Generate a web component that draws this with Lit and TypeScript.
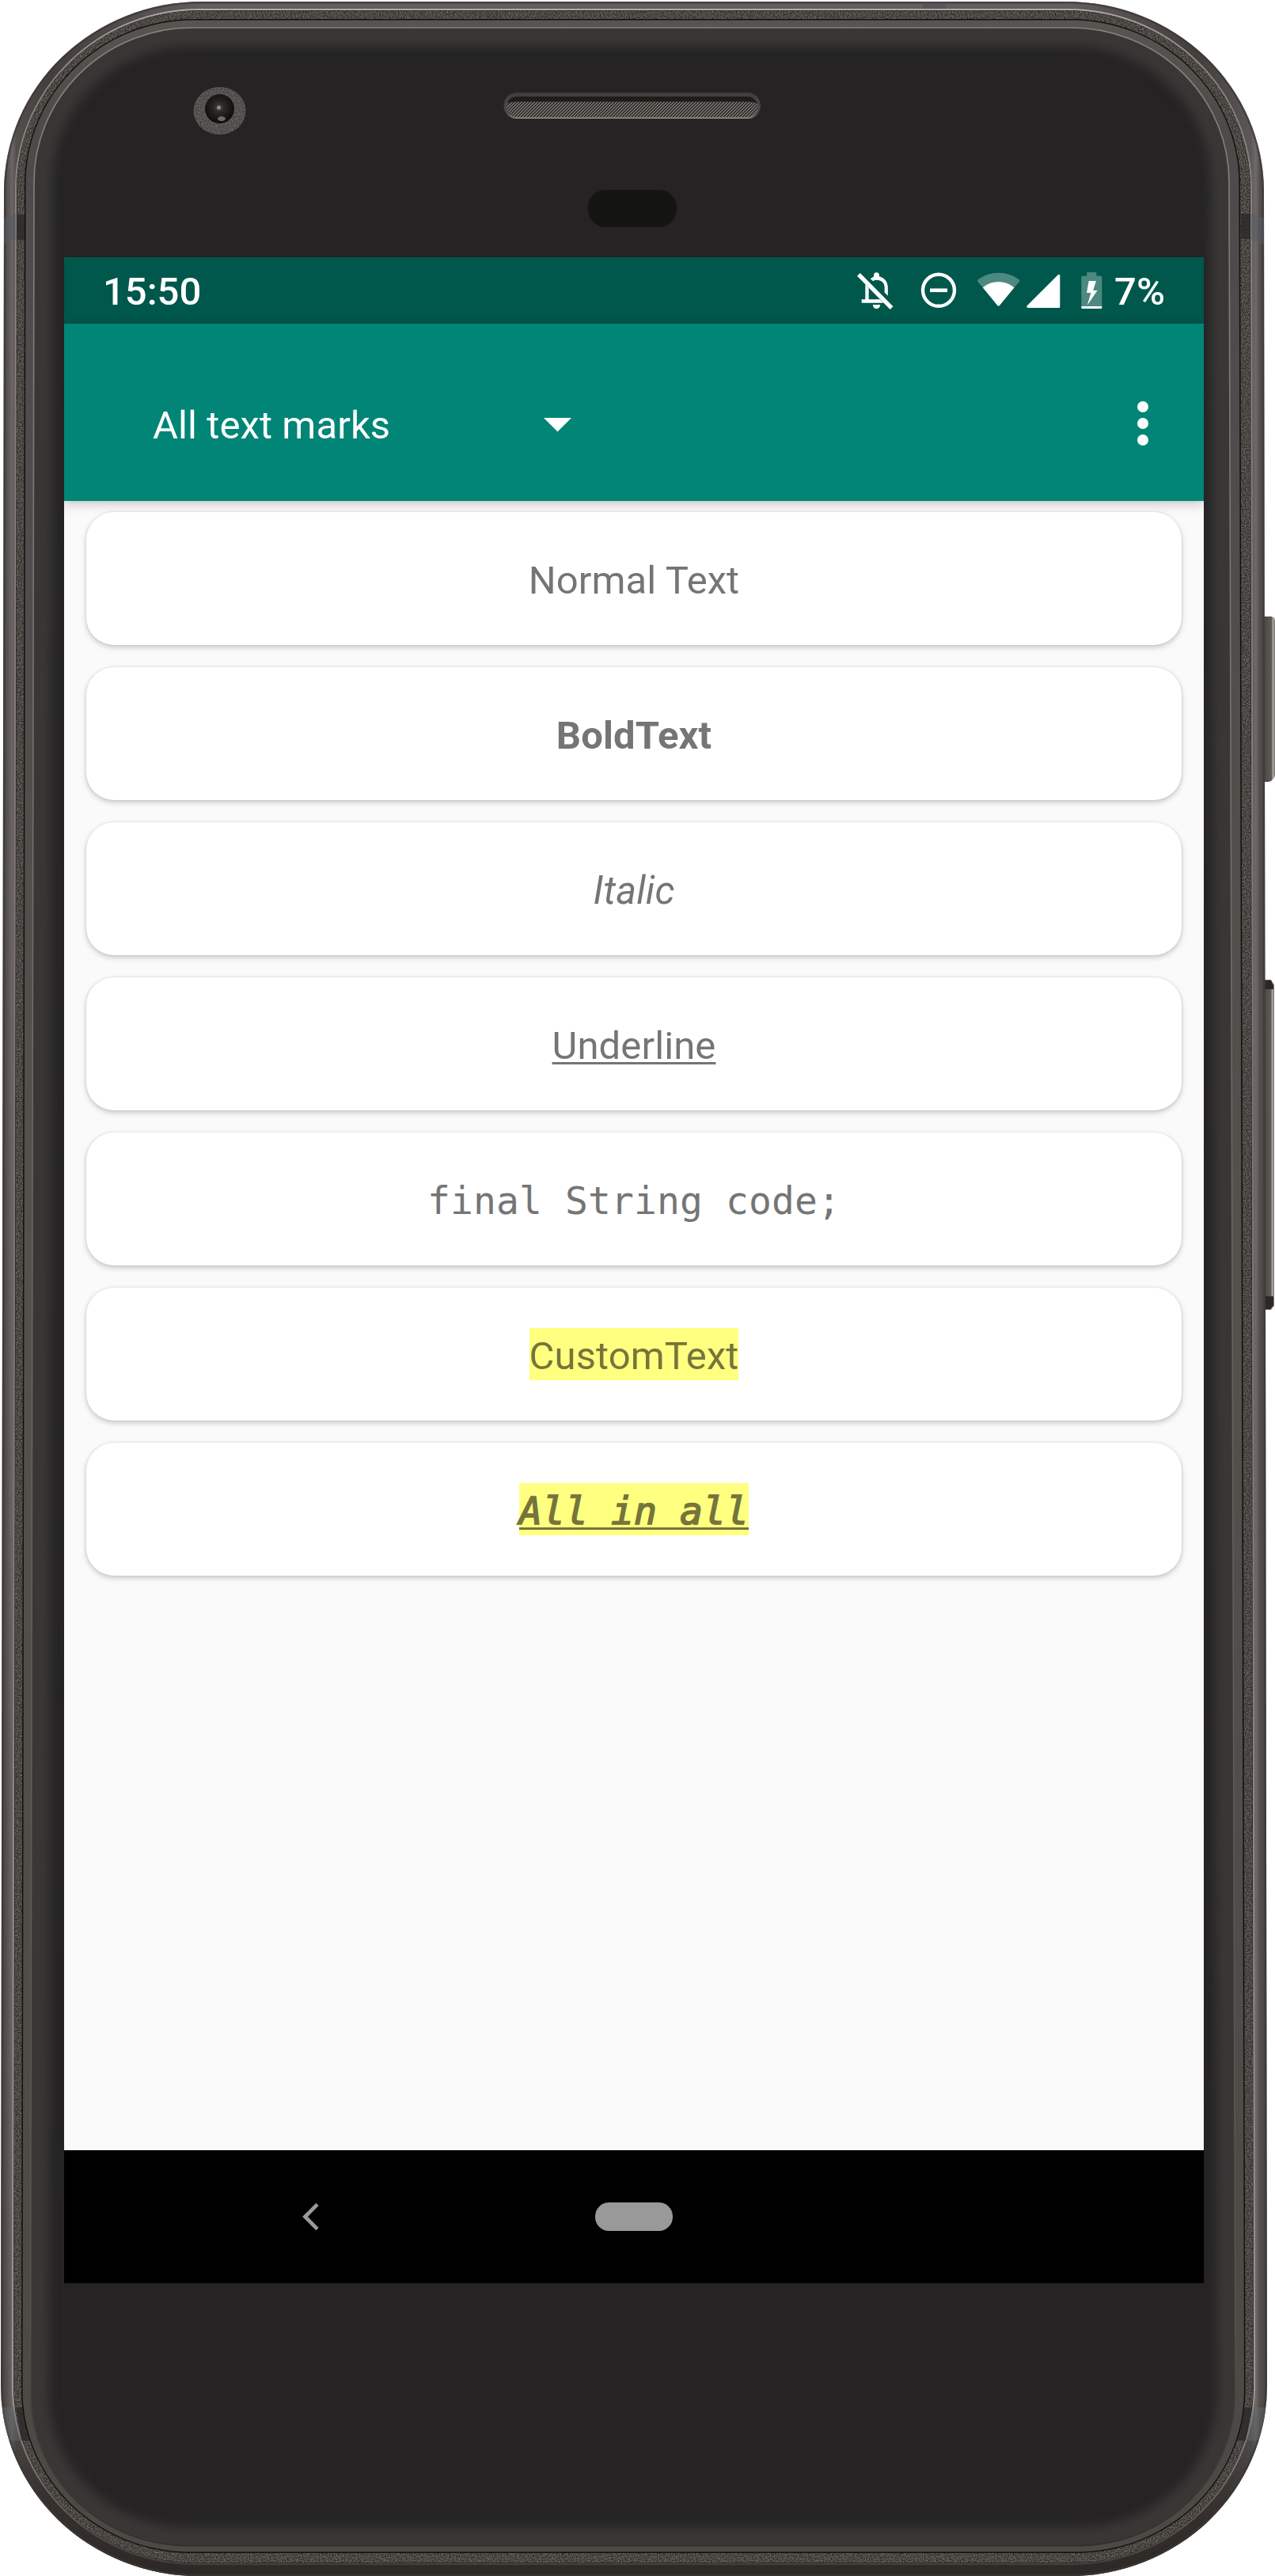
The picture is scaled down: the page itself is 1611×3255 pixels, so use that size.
import { LitElement, html, css, svg } from "lit";
import { customElement, property } from "lit/decorators.js";
import { classMap } from "lit/directives/class-map.js";

interface Shape {
  lt: number; lb: number; rt: number; rb: number;
  t: number; b: number;
  rx: number; ryt: number; ryb: number;
}

/** Rounded outline whose sides lean slightly outwards towards the bottom. */
function outline(s: Shape): string {
  return [
    `M${s.lt + s.rx} ${s.t}`,
    `H${s.rt - s.rx}`,
    `A${s.rx} ${s.ryt} 0 0 1 ${s.rt} ${s.t + s.ryt}`,
    `L${s.rb} ${s.b - s.ryb}`,
    `A${s.rx} ${s.ryb} 0 0 1 ${s.rb - s.rx} ${s.b}`,
    `H${s.lb + s.rx}`,
    `A${s.rx} ${s.ryb} 0 0 1 ${s.lb} ${s.b - s.ryb}`,
    `L${s.lt} ${s.t + s.ryt}`,
    `A${s.rx} ${s.ryt} 0 0 1 ${s.lt + s.rx} ${s.t}Z`,
  ].join(" ");
}

const OUTER = outline({ lt: 5, lb: 1, rt: 1597, rb: 1601, t: 2, b: 3255, rx: 250, ryt: 240, ryb: 240 });
const RIM = outline({ lt: 20, lb: 16, rt: 1581, rb: 1585, t: 12, b: 3240, rx: 232, ryt: 226, ryb: 224 });
const GRAIN = outline({ lt: 21.5, lb: 17.5, rt: 1579.5, rb: 1583.5, t: 13.5, b: 3238.5, rx: 229, ryt: 223, ryb: 222 });
const GROOVE = outline({ lt: 31, lb: 27, rt: 1567, rb: 1573.5, t: 24, b: 3226, rx: 214, ryt: 209, ryb: 206 });
const BAND = outline({ lt: 32.5, lb: 28.5, rt: 1565.5, rb: 1572, t: 25.5, b: 3224.5, rx: 212, ryt: 207, ryb: 204 });
const GLASS = outline({ lt: 43, lb: 38.5, rt: 1553, rb: 1561, t: 35, b: 3217, rx: 200, ryt: 195, ryb: 192 });

@customElement("phone-frame")
export class PhoneFrame extends LitElement {
  static styles = css`
    :host { display: block; }
    svg { display: block; }
  `;

  render() {
    return html`<svg width="1611" height="3255" viewBox="0 0 1611 3255">
      <defs>
        <linearGradient id="metal" x1="0" y1="0" x2="1611" y2="0" gradientUnits="userSpaceOnUse">
          <stop offset="0" stop-color="#403c3a" /><stop offset=".005" stop-color="#544f4d" />
          <stop offset=".0095" stop-color="#6b6665" /><stop offset=".013" stop-color="#524e4c" />
          <stop offset=".04" stop-color="#433e3b" /><stop offset=".16" stop-color="#625d5e" />
          <stop offset=".84" stop-color="#625d5e" /><stop offset=".94" stop-color="#433e3b" />
          <stop offset=".981" stop-color="#5c5758" /><stop offset=".985" stop-color="#6e6a6a" />
          <stop offset=".988" stop-color="#544f4d" /><stop offset="1" stop-color="#373230" />
        </linearGradient>
        <linearGradient id="foot" x1="0" y1="3030" x2="0" y2="3255" gradientUnits="userSpaceOnUse">
          <stop offset="0" stop-color="#302b28" stop-opacity="0" />
          <stop offset=".6" stop-color="#302b28" stop-opacity=".75" />
          <stop offset="1" stop-color="#2b2725" />
        </linearGradient>
        <linearGradient id="rimlight" x1="0" y1="0" x2="0" y2="3255" gradientUnits="userSpaceOnUse">
          <stop offset="0" stop-color="#b5afaf" /><stop offset=".03" stop-color="#8a8482" />
          <stop offset=".5" stop-color="#7d7877" /><stop offset=".93" stop-color="#a09b98" />
          <stop offset=".98" stop-color="#5e5854" /><stop offset="1" stop-color="#3e3935" />
        </linearGradient>
        <linearGradient id="band" x1="0" y1="0" x2="0" y2="3255" gradientUnits="userSpaceOnUse">
          <stop offset="0" stop-color="#595652" /><stop offset=".05" stop-color="#4d4b49" />
          <stop offset=".5" stop-color="#52514e" /><stop offset="1" stop-color="#4c4844" />
        </linearGradient>
        <linearGradient id="edge" x1="0" y1="0" x2="0" y2="3255" gradientUnits="userSpaceOnUse">
          <stop offset="0" stop-color="#858480" /><stop offset=".5" stop-color="#666562" />
          <stop offset=".9" stop-color="#55524e" /><stop offset="1" stop-color="#2c2a29" />
        </linearGradient>
        <linearGradient id="key" x1="0" y1="0" x2="1" y2="0">
          <stop offset="0" stop-color="#4a4642" /><stop offset=".68" stop-color="#5e5a56" />
          <stop offset=".8" stop-color="#aaa8a6" /><stop offset="1" stop-color="#77736f" />
        </linearGradient>
        <linearGradient id="slot" x1="0" y1="117" x2="0" y2="150" gradientUnits="userSpaceOnUse">
          <stop offset="0" stop-color="#3f3e3e" /><stop offset=".8" stop-color="#4c4b4b" /><stop offset="1" stop-color="#8b8986" />
        </linearGradient>
        <radialGradient id="lens" cx=".48" cy=".45" r=".55">
          <stop offset="0" stop-color="#4b4b49" /><stop offset=".35" stop-color="#282726" /><stop offset="1" stop-color="#0d0c0c" />
        </radialGradient>
        <pattern id="mesh" width="4" height="4" patternUnits="userSpaceOnUse">
          <rect width="4" height="4" fill="#292825" />
          <path d="M-1 1L1 -1M0 4L4 0M3 5L5 3" stroke="#8e8c85" stroke-width="1.2" />
        </pattern>
        <filter id="noise" x="0" y="0" width="1611" height="3255" filterUnits="userSpaceOnUse" color-interpolation-filters="sRGB">
          <feTurbulence type="fractalNoise" baseFrequency=".6" numOctaves="2" seed="4" result="n" />
          <feColorMatrix in="n" type="matrix" values="0.5 0 0 0 0.045  0.5 0 0 0 0.03  0.5 0 0 0 0.01  0 0 0 0 1" result="g" />
          <feComposite in="g" in2="SourceGraphic" operator="in" />
        </filter>
        <filter id="soft" x="0" y="0" width="1611" height="3255" filterUnits="userSpaceOnUse" color-interpolation-filters="sRGB">
          <feGaussianBlur stdDeviation="7" />
        </filter>
        <clipPath id="glassclip"><path d=${GLASS} /></clipPath>
        <clipPath id="outerclip"><path d=${OUTER} /></clipPath>
      </defs>

      <path d="M1597 779H1606Q1611 779 1611 785V980Q1609 987 1602 988H1597Z" fill="url(#key)" />
      <path d="M1597 1238H1606L1610 1244V1650L1606 1655H1597Z" fill="url(#key)" />
      <path d="M1597 1239H1606L1609 1245V1250H1597ZM1597 1638H1609V1650L1605 1654H1597Z" fill="#2b2827" />

      <path d=${OUTER} fill="url(#metal)" />
      <path d=${OUTER} fill="url(#foot)" />
      <path d=${OUTER} fill="none" stroke="#3b3735" stroke-width="5" opacity=".7" clip-path="url(#outerclip)" />
      <path d=${RIM} fill="#171312" stroke="url(#rimlight)" stroke-width="2" />
      <g filter="url(#noise)"><path d=${GRAIN} fill="#4a4742" /></g>
      <g clip-path="url(#outerclip)">
        <path d="M5 275L20 270V302L5 309ZM1581 270L1598 276V309L1581 303Z" fill="#565a63" opacity=".5" />
        <path d="M21 271H31V303H21ZM1568 270H1580V302H1568Z" fill="#2a2929" opacity=".8" />
        <path d="M0 3042H18L28 3084H0ZM1582 3042H1601V3084H1574Z" fill="#6a6d74" opacity=".4" />
        <path d="M20 3042H31L40 3084H27ZM1572 3042H1582L1574 3084H1563Z" fill="#2a2929" opacity=".8" />
        <path d="M1166 2H1194V11H1166Z" fill="#4d4c51" opacity=".5" />
      </g>
      <path d=${GROOVE} fill="#12100f" />
      <path d=${BAND} fill="url(#band)" />
      <path d=${GLASS} fill="#252324" />
      <g clip-path="url(#glassclip)">
        <path d=${GLASS} fill="none" stroke="#393836" stroke-width="46" filter="url(#soft)" />
        <path d=${GLASS} fill="none" stroke="#383735" stroke-width="16" />
      </g>
      <path d=${GLASS} fill="none" stroke="url(#edge)" stroke-width="1.6" />

      <g filter="url(#noise)"><ellipse cx="277.5" cy="140" rx="33" ry="30" fill="#555" /></g>
      <ellipse cx="277.5" cy="140" rx="33" ry="30" fill="#66646a" opacity=".35" />
      <circle cx="277.5" cy="137.500" r="18.5" fill="url(#lens)" />
      <circle cx="276.500" cy="136" r="2.5" fill="#8c8b89" />
      <ellipse cx="280" cy="150" rx="5" ry="3" fill="#6b6a66" />

      <rect x="636.500" y="117" width="324.500" height="33" rx="16.5" fill="url(#slot)" />
      <rect x="640" y="122" width="317.500" height="26" rx="13" fill="url(#mesh)" />
      <path d="M641 131Q644 122 653 122H944.500Q953 122 957 131Q953 128.500 944 128.500H653Q645 128.500 641 131Z" fill="#151412" opacity=".85" />
      <rect x="743" y="240" width="112" height="47" rx="22" fill="#141410" />
    </svg>`;
  }
}

const bellOff = svg`
  <path d="M116 97L123 92.500Q128 90 129.500 87V83A10 10 0 0 1 149.500 83V87.500C169 92 182.500 108 182.500 129V161L170 148.500V130C170 112 157 101.500 140 101.500Q132 101.500 126.500 105.500Z"/>
  <path d="M97 118L110 131V175H152L166 188.500H83V175H97Z"/>
  <path d="M125.500 195H153.500C153 204 147.500 210.500 139.500 210.500S126 204 125.500 195Z"/>
  <path d="M77.500 75L66 86L191 213L202.500 202Z"/>`;

@customElement("status-bar")
export class StatusBar extends LitElement {
  static styles = css`
    :host { display: block; }
    .bar {
      display: flex; align-items: center; height: 84px; box-sizing: border-box;
      padding: 0 49px 0 49px; background: #00574b; color: #fff;
      font: 500 49px/66px Roboto, sans-serif;
    }
    .label { padding-top: 4px; }
    .icons { display: flex; align-items: center; margin-left: auto; }
    svg { display: block; fill: #fff; }
    .bell { margin-right: 34px; }
    .dnd { margin-right: 26px; }
    .wifi { margin-right: 8px; }
    .signal { margin-right: 26px; }
    .battery { margin-right: 15px; }
    .faint { opacity: 0.3; }
  `;

  render() {
    return html`<div class="bar">
      <span class="label">15:50</span>
      <div class="icons">
        <svg class="bell" width="46" height="84" viewBox="66 15 138 252">${bellOff}</svg>
        <svg class="dnd" width="46" height="84" viewBox="1163 325 46 84">
          <circle cx="1186" cy="366.800" r="20" fill="none" stroke="#fff" stroke-width="4.400" />
          <rect x="1175" y="364.500" width="22" height="4.600" />
        </svg>
        <svg class="wifi" width="54" height="84" viewBox="525 15 162 252">
          <path class="faint" d="M526 107Q524 102 528 99Q562 74 605 74T682 99Q686 102 684 107L665 130Q640 108 605 108T545 130Z" />
          <path d="M545 130Q571 108 605 108T665 130L609 198Q605 203 601 198Z" />
        </svg>
        <svg class="signal" width="43" height="84" viewBox="710 15 129 252">
          <path d="M828 83Q837 77 837 86V203Q837 207 833 207H716Q707 206 713 198Z" />
        </svg>
        <svg class="battery" width="27" height="84" viewBox="917 15 81 252">
          <path class="faint" fill-rule="evenodd" d="M939 72H975V86H991Q996 86 996 91V201H918V91Q918 86 923 86H939ZM946 105L938 150H954L940 198L979 141H963L974 105Z" />
          <path d="M946 105L938 150H954L940 198L979 141H963L974 105Z" />
          <path d="M918 201H996V206Q996 210 992 210H922Q918 210 918 206Z" />
        </svg>
        <span class="label">7%</span>
      </div>
    </div>`;
  }
}

@customElement("tool-bar")
export class ToolBar extends LitElement {
  static styles = css`
    :host { display: block; position: relative; }
    .bar {
      display: flex; align-items: center; height: 224px; box-sizing: border-box;
      padding: 28px 70px 0 112px; background: #008577; color: #fff;
      box-shadow: 0 4px 14px rgba(0, 0, 0, 0.2), 0 0 5px rgba(0, 0, 0, 0.08);
      font: 400 49px/66px Roboto, sans-serif;
    }
    .picker { display: flex; align-items: center; justify-content: space-between; width: 529px; }
    .label { padding-top: 5px; letter-spacing: 0.1px; }
    svg { display: block; fill: #fff; }
    .arrow { padding-top: 4px; }
    .more { margin-left: auto; }
  `;

  render() {
    return html`<div class="bar">
      <div class="picker">
        <span class="label">All text marks</span>
        <svg class="arrow" width="35" height="18" viewBox="0 0 35 18"><path d="M0 0H35L17.500 17.500Z" /></svg>
      </div>
      <svg class="more" width="14" height="56" viewBox="0 0 14 56">
        <circle cx="7" cy="7" r="7" /><circle cx="7" cy="28" r="7" /><circle cx="7" cy="49" r="7" />
      </svg>
    </div>`;
  }
}

type Mark = "bold" | "italic" | "underline" | "code" | "custom";

@customElement("text-card")
export class TextCard extends LitElement {
  @property() text = "";
  @property({ attribute: false }) marks: Mark[] = [];

  static styles = css`
    :host { display: block; }
    .card {
      display: flex; align-items: center; justify-content: center; height: 168px;
      border-radius: 35px; background: #fff; color: #757575;
      box-shadow: 0 3px 7px rgba(0, 0, 0, 0.2), 0 0 3px rgba(0, 0, 0, 0.1);
      font: 400 49px/72px Roboto, sans-serif;
    }
    .text { display: block; height: 66px; white-space: pre; letter-spacing: 0.1px; }
    .bold { font-weight: 700; }
    .italic { font-style: italic; }
    .underline {
      text-decoration: underline; text-decoration-thickness: 2.5px;
      text-underline-offset: 3.5px; text-decoration-skip-ink: none;
    }
    .code { font-family: "DejaVu Sans Mono", monospace; font-size: 48px; line-height: 70px; }
    .code.bold { font-weight: 400; -webkit-text-stroke: 1.7px currentColor; }
    .custom { background: #ffff80; color: #75753b; }
  `;

  render() {
    const classes: Record<string, boolean> = { text: true };
    for (const mark of this.marks) classes[mark] = true;
    return html`<div class="card"><span class=${classMap(classes)}>${this.text}</span></div>`;
  }
}

const CARDS: { text: string; marks: Mark[] }[] = [
  { text: "Normal Text", marks: [] },
  { text: "BoldText", marks: ["bold"] },
  { text: "Italic", marks: ["italic"] },
  { text: "Underline", marks: ["underline"] },
  { text: "final String code;", marks: ["code"] },
  { text: "CustomText", marks: ["custom"] },
  { text: "All in all", marks: ["bold", "italic", "underline", "code", "custom"] },
];

@customElement("app-root")
export class AppRoot extends LitElement {
  static styles = css`
    :host { display: block; background: #fff; }
    .device { display: grid; width: 1611px; height: 3255px; overflow: hidden; }
    phone-frame { grid-area: 1 / 1; }
    .screen {
      grid-area: 1 / 1; display: flex; flex-direction: column; position: relative;
      width: 1440px; height: 2560px; margin: 325px 0 0 81px;
      background: #fafafa; overflow: hidden;
    }
    .list {
      flex: 1; display: flex; flex-direction: column; gap: 28px;
      padding: 14px 28px; position: relative;
    }
    .nav { display: flex; align-items: center; height: 168px; background: #000; }
    .nav svg { display: block; margin-left: 301px; }
    .home { width: 98px; height: 36px; margin-left: 349px; border-radius: 17.5px; background: #999; }
  `;

  render() {
    return html`<div class="device">
      <phone-frame></phone-frame>
      <div class="screen">
        <status-bar></status-bar>
        <tool-bar></tool-bar>
        <div class="list">
          ${CARDS.map((c) => html`<text-card .text=${c.text} .marks=${c.marks}></text-card>`)}
        </div>
        <div class="nav">
          <svg width="21" height="36" viewBox="0 0 21 36">
            <path d="M19 2.400L3.500 18L19 33.600" fill="none" stroke="#999" stroke-width="4.800" />
          </svg>
          <div class="home"></div>
        </div>
      </div>
    </div>`;
  }
}
